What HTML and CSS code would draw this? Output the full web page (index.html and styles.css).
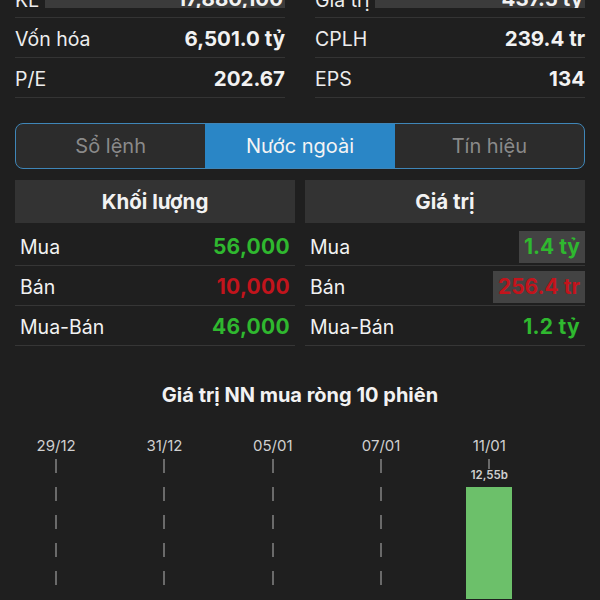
FILE: index.html
```html
<!DOCTYPE html>
<html lang="vi">
<head>
<meta charset="utf-8">
<link rel="stylesheet" href="styles.css">
</head>
<body>
<div class="page">
  <div class="stats">
    <div class="col">
      <div class="row first"><span class="lbl">KL</span><span class="val flash">17,880,100</span></div>
      <div class="row"><span class="lbl">Vốn hóa</span><span class="val">6,501.0 tỷ</span></div>
      <div class="row"><span class="lbl">P/E</span><span class="val">202.67</span></div>
    </div>
    <div class="col">
      <div class="row first"><span class="lbl">Giá trị</span><span class="val flash">437.5 tỷ</span></div>
      <div class="row"><span class="lbl">CPLH</span><span class="val">239.4 tr</span></div>
      <div class="row"><span class="lbl">EPS</span><span class="val">134</span></div>
    </div>
  </div>

  <div class="tabs">
    <div class="tab">Sổ lệnh</div>
    <div class="tab active">Nước ngoài</div>
    <div class="tab">Tín hiệu</div>
  </div>

  <div class="tables">
    <div class="tbl">
      <div class="th">Khối lượng</div>
      <div class="tr"><span>Mua</span><span class="up">56,000</span></div>
      <div class="tr"><span>Bán</span><span class="down">10,000</span></div>
      <div class="tr"><span>Mua-Bán</span><span class="up">46,000</span></div>
    </div>
    <div class="tbl">
      <div class="th">Giá trị</div>
      <div class="tr"><span>Mua</span><span class="up hl">1.4 tỷ</span></div>
      <div class="tr"><span>Bán</span><span class="down hl">256.4 tr</span></div>
      <div class="tr"><span>Mua-Bán</span><span class="up">1.2 tỷ</span></div>
    </div>
  </div>

  <div class="chart-title">Giá trị NN mua ròng 10 phiên</div>
</div>

<div class="chart">
  <div class="slot"><div class="date">29/12</div><div class="plot"></div></div>
  <div class="slot"><div class="date">31/12</div><div class="plot"></div></div>
  <div class="slot"><div class="date">05/01</div><div class="plot"></div></div>
  <div class="slot"><div class="date">07/01</div><div class="plot"></div></div>
  <div class="slot"><div class="date">11/01</div><div class="plot"><div class="bar-val">12,55b</div><div class="bar"></div></div></div>
</div>
</body>
</html>
```

FILE: styles.css
```css
* { box-sizing: border-box; }
html, body { margin: 0; padding: 0; }
body {
  background: #1f1f1f;
  color: #f2f2f2;
  font-family: Inter, "Noto Sans", "Liberation Sans", sans-serif;
  width: 600px;
  height: 600px;
  overflow: hidden;
}
.page { padding: 0 15px; }

.stats {
  display: grid;
  grid-template-columns: 1fr 1fr;
  column-gap: 30px;
  margin-top: -22px;
}
.row {
  height: 40px;
  display: flex;
  align-items: center;
  justify-content: space-between;
  border-bottom: 1px solid #343434;
  font-size: 19.5px;
  padding-top: 2px;
}
.row .lbl { color: #ededed; }
.row .val { font-weight: 700; font-size: 20.5px; }
.row.first { align-items: flex-start; padding-top: 0; }
.row.first .lbl { line-height: 20px; padding-top: 12px; }
.row.first .val.flash {
  flex: 1;
  margin-left: 6px;
  height: 30px;
  overflow: hidden;
  background: #3b3b3b;
  text-align: right;
  line-height: 20px;
  padding-top: 11px;
  padding-right: 2px;
}

.tabs {
  margin-top: 25px;
  height: 46px;
  display: grid;
  grid-template-columns: 1fr 1fr 1fr;
  border: 1.5px solid #3f86b8;
  border-radius: 8px;
  overflow: hidden;
  background: #2c2c2c;
}
.tab {
  display: flex;
  align-items: center;
  justify-content: center;
  font-size: 20px;
  color: #8a8a8a;
}
.tab.active { background: #2a86c6; color: #f4f4f4; }

.tables {
  margin-top: 11px;
  display: grid;
  grid-template-columns: 1fr 1fr;
  column-gap: 10px;
}
.th {
  height: 43px;
  background: #333333;
  display: flex;
  align-items: center;
  justify-content: center;
  font-weight: 700;
  font-size: 20.5px;
  margin-bottom: 3px;
}
.tr {
  height: 40px;
  display: flex;
  align-items: center;
  justify-content: space-between;
  padding: 2px 5px 0;
  border-bottom: 1px solid #363636;
  font-size: 19.5px;
}
.tr .up { color: #2fb82f; font-weight: 700; font-size: 21px; letter-spacing: 0.3px; }
.tr .down { color: #c2141c; font-weight: 700; font-size: 21px; letter-spacing: 0.3px; }
.tr .hl {
  background: #434343;
  height: 32px;
  line-height: 32px;
  padding: 0 5px;
  margin-right: -5px;
  letter-spacing: 0;
}

.chart-title {
  margin-top: 37px;
  text-align: center;
  font-weight: 700;
  font-size: 20px;
}

.chart {
  display: flex;
  padding-left: 2px;
  margin-top: 30px;
}
.slot {
  width: 108.3px;
  display: flex;
  flex-direction: column;
  align-items: center;
}
.date {
  font-size: 15px;
  color: #d0d0d0;
  line-height: 18px;
}
.plot {
  position: relative;
  width: 100%;
  height: 140px;
  margin-top: 4px;
  display: flex;
  flex-direction: column;
  align-items: center;
}
.plot::before {
  content: "";
  position: absolute;
  left: calc(50% - 1px);
  top: 0;
  width: 2px;
  height: 100%;
  background: repeating-linear-gradient(to bottom, #6a6a6a 0 14px, transparent 14px 28px);
}
.bar-val {
  position: relative;
  margin-top: 10px;
  font-size: 11.5px;
  font-weight: 600;
  color: #cfcfcf;
  line-height: 12px;
  background: #1f1f1f;
  padding: 0 2px;
}
.bar {
  position: relative;
  margin-top: 6px;
  width: 46px;
  flex: 1;
  background: #6cc06a;
}
```
